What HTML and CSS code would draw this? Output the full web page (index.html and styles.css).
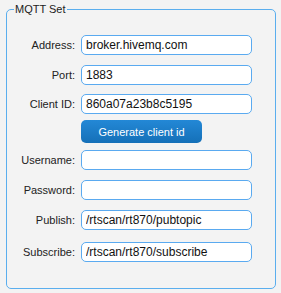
FILE: index.html
```html
<!DOCTYPE html>
<html>
<head>
    <title>MQTT Set</title>
    <link rel="stylesheet" href="styles.css">
</head>
<body>
    <fieldset class="panel">
        <legend>MQTT Set</legend>
        <div class="rows">
            <div class="row">
                <label for="address">Address:</label>
                <input type="text" id="address" value="broker.hivemq.com">
            </div>
            <div class="row">
                <label for="port">Port:</label>
                <input type="text" id="port" value="1883">
            </div>
            <div class="row">
                <label for="clientId">Client ID:</label>
                <input type="text" id="clientId" value="860a07a23b8c5195">
            </div>
            <div class="row row-btn">
                <span></span>
                <button type="button" class="gen-btn">Generate client id</button>
            </div>
            <div class="row row-user">
                <label for="username">Username:</label>
                <input type="text" id="username">
            </div>
            <div class="row">
                <label for="password">Password:</label>
                <input type="password" id="password">
            </div>
            <div class="row">
                <label for="publish">Publish:</label>
                <input type="text" id="publish" value="/rtscan/rt870/pubtopic">
            </div>
            <div class="row row-sub">
                <label for="subscribe">Subscribe:</label>
                <input type="text" id="subscribe" value="/rtscan/rt870/subscribe" autofocus>
            </div>
        </div>
    </fieldset>
</body>
</html>
```

FILE: styles.css
```css
body {
    margin: 0;
    padding: 3px 6px 0 6px;
    background-color: #f3f3f3;
    font-family: 'Liberation Sans', Arial, sans-serif;
}

.panel {
    box-sizing: border-box;
    width: 270px;
    height: 286px;
    margin: 0;
    padding: 0 0 0 7px;
    border: 1px solid #5aaeee;
    border-radius: 5px;
}

.panel legend {
    padding: 0 1px;
    font-size: 11px;
    line-height: 13px;
    color: #222;
}

.rows {
    display: flex;
    flex-direction: column;
    padding-top: 19px;
}

.row {
    display: grid;
    grid-template-columns: 68px 171px;
    column-gap: 6px;
    align-items: center;
    margin-left: -7px;
    margin-bottom: 10px;
}

.row:nth-child(2) {
    margin-bottom: 9px;
}

.row:nth-child(3) {
    margin-bottom: 6px;
}

.row-btn {
    margin-bottom: 7px;
}

.row-sub {
    margin-top: 2px;
}

.row label {
    text-align: right;
    font-size: 11px;
    color: #222;
}

.row input {
    box-sizing: border-box;
    height: 20px;
    width: 171px;
    padding: 0 4px;
    border: 1px solid #5aaaf0;
    border-radius: 5px;
    background-color: #fff;
    font-family: 'Liberation Sans', Arial, sans-serif;
    font-size: 12px;
    color: #111;
    outline: none;
}

.gen-btn {
    justify-self: start;
    height: 23px;
    width: 121px;
    padding: 0;
    border: none;
    border-radius: 5px;
    background: linear-gradient(#2388d6, #1570b8);
    color: #fff;
    font-family: 'Liberation Sans', Arial, sans-serif;
    font-size: 11px;
}
```
